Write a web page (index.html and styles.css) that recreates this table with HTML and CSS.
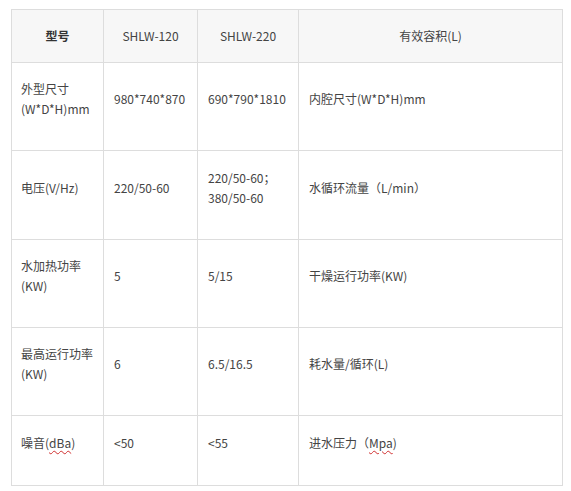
FILE: index.html
```html
<!DOCTYPE html>
<html lang="zh-CN">
<head>
<meta charset="utf-8">
<title>参数表</title>
<link rel="stylesheet" href="styles.css">
</head>
<body>
<div class="wrap">
<table class="spec">
<colgroup>
<col class="c1"><col class="c2"><col class="c3"><col class="c4">
</colgroup>
<thead>
<tr class="head">
<th class="bold">型号</th>
<th>SHLW-120</th>
<th>SHLW-220</th>
<th>有效容积(L)</th>
</tr>
</thead>
<tbody>
<tr class="r88">
<td>外型尺寸<br>(W*D*H)mm</td>
<td>980*740*870</td>
<td>690*790*1810</td>
<td>内腔尺寸(W*D*H)mm</td>
</tr>
<tr class="r89">
<td>电压(V/Hz)</td>
<td>220/50-60</td>
<td>220/50-60；<br>380/50-60</td>
<td>水循环流量（L/min）</td>
</tr>
<tr class="r88">
<td>水加热功率<br>(KW)</td>
<td>5</td>
<td>5/15</td>
<td>干燥运行功率(KW)</td>
</tr>
<tr class="r88">
<td>最高运行功率<br>(KW)</td>
<td>6</td>
<td>6.5/16.5</td>
<td>耗水量/循环(L)</td>
</tr>
<tr class="r70">
<td>噪音(<span class="spell">dBa</span>)</td>
<td>&lt;50</td>
<td>&lt;55</td>
<td>进水压力（<span class="spell">Mpa</span>)</td>
</tr>
</tbody>
</table>
</div>
</body>
</html>
```
FILE: styles.css
```css
html, body {
  margin: 0;
  padding: 0;
  background: #ffffff;
}
.wrap {
  padding: 9px 0 0 11px;
}
.spec {
  border-collapse: collapse;
  table-layout: fixed;
  width: 551px;
  font-family: "Noto Sans CJK SC", "Noto Sans", sans-serif;
  font-size: 12px;
  line-height: 20px;
  color: #444444;
}
.c1 { width: 92px; }
.c2 { width: 94px; }
.c3 { width: 101px; }
.c4 { width: 264px; }
.spec th, .spec td {
  border: 1px solid #dddddd;
  vertical-align: middle;
}
.spec th {
  background: #f7f7f7;
  font-weight: normal;
  text-align: center;
  padding: 0 4px;
}
.spec th.bold {
  font-weight: bold;
  color: #333333;
}
.head th { height: 52px; }
.spec td {
  text-align: left;
  padding: 0 4px 15px 9px;
}
.spec td + td {
  padding-left: 10px;
}
.r88 td { height: 72px; }
.r89 td { height: 73px; }
.r70 td { height: 54px; }
.spell {
  text-decoration: underline wavy #d03030;
  text-decoration-thickness: 1px;
  text-underline-offset: 2px;
}
```
